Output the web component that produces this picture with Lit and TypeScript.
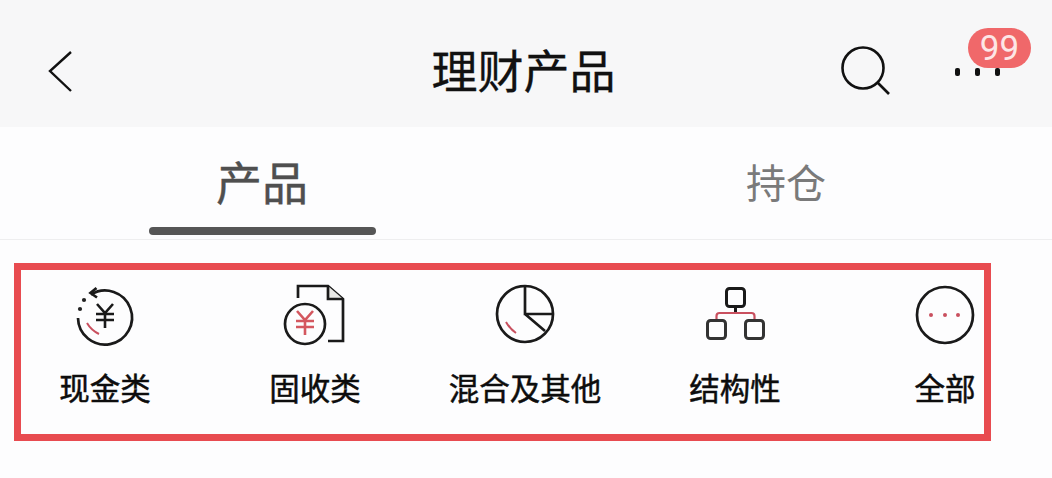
import { LitElement, html, svg, css } from 'lit';
import { customElement } from 'lit/decorators.js';

const RED = '#c9505f';
const yen = (x: number, y: number, color: string) => svg`
  <path d="M${x - 8} ${y - 13} L${x} ${y - 4} L${x + 8} ${y - 13} M${x - 9} ${y - 3} H${x + 9} M${x - 9} ${y + 3} H${x + 9} M${x} ${y - 4} V${y + 11}"
    fill="none" stroke="${color}" stroke-width="2.6" />
`;

const icons = [
  svg`
    <path d="M8 37 A27 27 0 1 0 21 13.5" />
    <path d="M26.5 7 L20.5 12 L27 16.5" />
    <circle cx="14" cy="19" r="2.1" fill="#222" stroke="none" />
    <circle cx="10" cy="28" r="2.1" fill="#222" stroke="none" />
    <path d="M17 42 Q21 49 29 53" stroke="${RED}" stroke-width="2" />
    ${yen(35, 36, '#1a1a1a')}
  `,
  svg`
    <path d="M18 17 V5 H48 L63 18 V60 H48" />
    <path d="M48 5 V18 H63 Z" fill="#e9e9e6" stroke="none" />
    <path d="M48 5 V18 H63" />
    <circle cx="25" cy="43" r="20" />
    ${yen(25, 43, '#d4575f')}
  `,
  svg`
    <circle cx="35" cy="33" r="28" />
    <path d="M35 5 V33 H63 M35 33 L55 50" />
    <path d="M16 41 Q20 48 26 52" stroke="${RED}" stroke-width="2" />
  `,
  svg`
    <rect x="26.5" y="7.5" width="18" height="18" rx="3" stroke-width="3" />
    <path d="M35.5 26 V32" stroke-width="3" />
    <path d="M16.5 39 V35 Q16.5 32 19.5 32 H51.5 Q54.5 32 54.5 35 V39" stroke="${RED}" stroke-width="2.2" />
    <rect x="7.5" y="39.5" width="18" height="18" rx="3" stroke="#333" stroke-width="3" />
    <rect x="45.5" y="39.5" width="18" height="18" rx="3" stroke="#333" stroke-width="3" />
  `,
  svg`
    <circle cx="35" cy="34" r="28" />
    <circle cx="21" cy="34" r="2" fill="${RED}" stroke="none" />
    <circle cx="35" cy="34" r="2" fill="${RED}" stroke="none" />
    <circle cx="48" cy="34" r="2" fill="${RED}" stroke="none" />
  `,
];

const labels = ['现金类', '固收类', '混合及其他', '结构性', '全部'];

@customElement('app-root')
export class AppRoot extends LitElement {
  static styles = css`
    :host {
      display: block;
      position: relative;
      width: 1052px;
      height: 478px;
      overflow: hidden;
      background: #fdfdfe;
      font-family: "Liberation Sans", "Noto Sans CJK SC", sans-serif;
    }

    .header {
      display: grid;
      grid-template-columns: 1fr auto 1fr;
      align-items: center;
      height: 127px;
      padding: 17px 52px 0 47px;
      box-sizing: border-box;
      background: #f7f7f8;
    }

    .back {
      display: block;
    }

    .title {
      font-size: 46px;
      font-weight: 400;
      line-height: 60px;
      color: #111;
      -webkit-text-stroke: 0.3px #111;
    }

    .actions {
      display: flex;
      justify-content: flex-end;
      align-items: center;
      gap: 65px;
    }

    .more {
      display: flex;
      gap: 15px;
    }

    .more i {
      display: block;
      width: 5px;
      height: 8px;
      border-radius: 2px;
      background: #111;
    }

    .badge {
      position: absolute;
      left: 968px;
      top: 28px;
      width: 63px;
      height: 40px;
      border-radius: 20px;
      background: #f0686a;
      color: #fde6e6;
      font-family: Roboto, sans-serif;
      font-size: 35px;
      line-height: 41px;
      text-align: center;
    }

    .tabs {
      display: grid;
      grid-template-columns: 1fr 1fr;
      height: 113px;
      padding-right: 4px;
      box-sizing: border-box;
      border-bottom: 1px solid #eeeeef;
    }

    .tab {
      display: flex;
      flex-direction: column;
      align-items: center;
      justify-content: space-between;
      padding-top: 28px;
      padding-bottom: 4px;
      font-size: 40px;
      line-height: 58px;
      color: #7a7a7a;
    }

    .tab.active {
      font-size: 46px;
      font-weight: 400;
      color: #4f4f4f;
      -webkit-text-stroke: 0.4px #4f4f4f;
    }

    .underline {
      width: 227px;
      height: 8px;
      border-radius: 4px;
      background: #565656;
    }

    .grid {
      display: grid;
      grid-template-columns: repeat(5, 210px);
      padding-top: 41px;
    }

    .item {
      display: flex;
      flex-direction: column;
      align-items: center;
      gap: 18px;
      font-size: 30.5px;
      font-weight: 400;
      line-height: 40px;
      color: #0d0d0d;
      -webkit-text-stroke: 0.5px #0d0d0d;
      white-space: nowrap;
    }

    .item svg {
      display: block;
      fill: none;
      stroke: #1a1a1a;
      stroke-width: 2.7;
    }

    .frame {
      position: absolute;
      left: 14px;
      top: 263px;
      width: 977px;
      height: 178px;
      box-sizing: border-box;
      border: 7px solid #e84b50;
    }
  `;

  render() {
    return html`
      <div class="header">
        <svg class="back" width="30" height="44" viewBox="0 0 30 44" fill="none" stroke="#111" stroke-width="2.4">
          <path d="M24 2 L3 21 L24 41" />
        </svg>
        <div class="title">理财产品</div>
        <div class="actions">
          <svg width="50" height="56" viewBox="0 0 50 56" fill="none" stroke="#111" stroke-width="2.6">
            <circle cx="23" cy="24" r="20.5" />
            <path d="M38 39 L49 50" />
          </svg>
          <div class="more"><i></i><i></i><i></i></div>
        </div>
      </div>
      <div class="badge">99</div>
      <div class="tabs">
        <div class="tab active">
          <span>产品</span>
          <div class="underline"></div>
        </div>
        <div class="tab"><span>持仓</span></div>
      </div>
      <div class="grid">
        ${labels.map(
          (label, i) => html`
            <div class="item">
              <svg width="70" height="70" viewBox="0 0 70 70">${icons[i]}</svg>
              <span>${label}</span>
            </div>
          `
        )}
      </div>
      <div class="frame"></div>
    `;
  }
}
